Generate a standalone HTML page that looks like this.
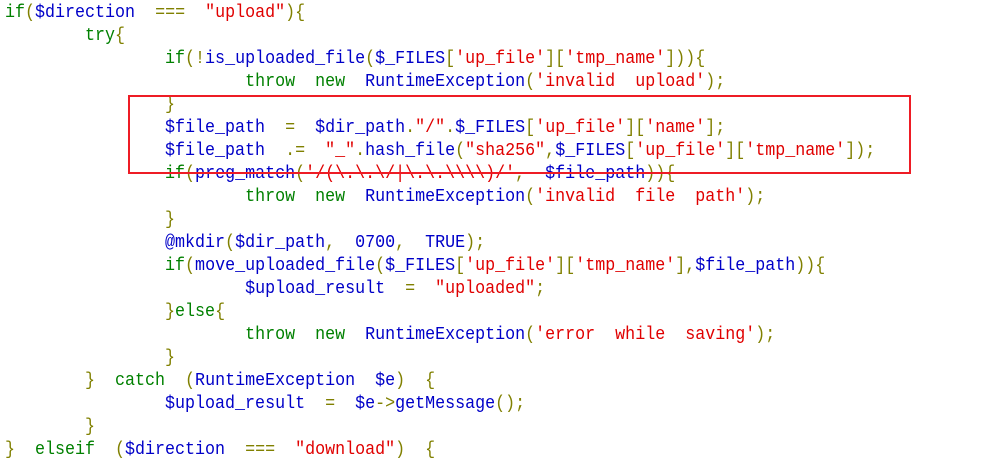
<!DOCTYPE html>
<html><head><meta charset="utf-8"><style>
html,body{margin:0;padding:0;background:#fff;width:994px;height:465px;overflow:hidden}
pre{margin:0;position:absolute;left:5px;top:2px;font-family:"Liberation Mono",monospace;font-size:18px;line-height:23px;white-space:pre;color:#808000;transform:scaleX(0.926);transform-origin:0 0}
.k{color:#008000}.v{color:#0000c8}.s{color:#e00000}.p{color:#808000}
.box{position:absolute;left:128px;top:95px;width:779px;height:75px;border:2px solid #ee1c25}
</style></head><body>
<pre><span class="k">if</span>(<span class="v">$direction</span>  ===  <span class="s">"upload"</span>){
        <span class="k">try</span>{
                <span class="k">if</span>(!<span class="v">is_uploaded_file</span>(<span class="v">$_FILES</span>[<span class="s">'up_file'</span>][<span class="s">'tmp_name'</span>])){
                        <span class="k">throw</span>  <span class="k">new</span>  <span class="v">RuntimeException</span>(<span class="s">'invalid  upload'</span>);
                }
                <span class="v">$file_path</span>  =  <span class="v">$dir_path</span>.<span class="s">"/"</span>.<span class="v">$_FILES</span>[<span class="s">'up_file'</span>][<span class="s">'name'</span>];
                <span class="v">$file_path</span>  .=  <span class="s">"_"</span>.<span class="v">hash_file</span>(<span class="s">"sha256"</span>,<span class="v">$_FILES</span>[<span class="s">'up_file'</span>][<span class="s">'tmp_name'</span>]);
                <span class="k">if</span>(<span class="v">preg_match</span>(<span class="s">'/(\.\.\/|\.\.\\\\)/'</span>,  <span class="v">$file_path</span>)){
                        <span class="k">throw</span>  <span class="k">new</span>  <span class="v">RuntimeException</span>(<span class="s">'invalid  file  path'</span>);
                }
                <span class="v">@mkdir</span>(<span class="v">$dir_path</span>,  <span class="v">0700</span>,  <span class="v">TRUE</span>);
                <span class="k">if</span>(<span class="v">move_uploaded_file</span>(<span class="v">$_FILES</span>[<span class="s">'up_file'</span>][<span class="s">'tmp_name'</span>],<span class="v">$file_path</span>)){
                        <span class="v">$upload_result</span>  =  <span class="s">"uploaded"</span>;
                }<span class="k">else</span>{
                        <span class="k">throw</span>  <span class="k">new</span>  <span class="v">RuntimeException</span>(<span class="s">'error  while  saving'</span>);
                }
        }  <span class="k">catch</span>  (<span class="v">RuntimeException</span>  <span class="v">$e</span>)  {
                <span class="v">$upload_result</span>  =  <span class="v">$e</span>-&gt;<span class="v">getMessage</span>();
        }
}  <span class="k">elseif</span>  (<span class="v">$direction</span>  ===  <span class="s">"download"</span>)  {
</pre>
<div class="box"></div>
</body></html>
